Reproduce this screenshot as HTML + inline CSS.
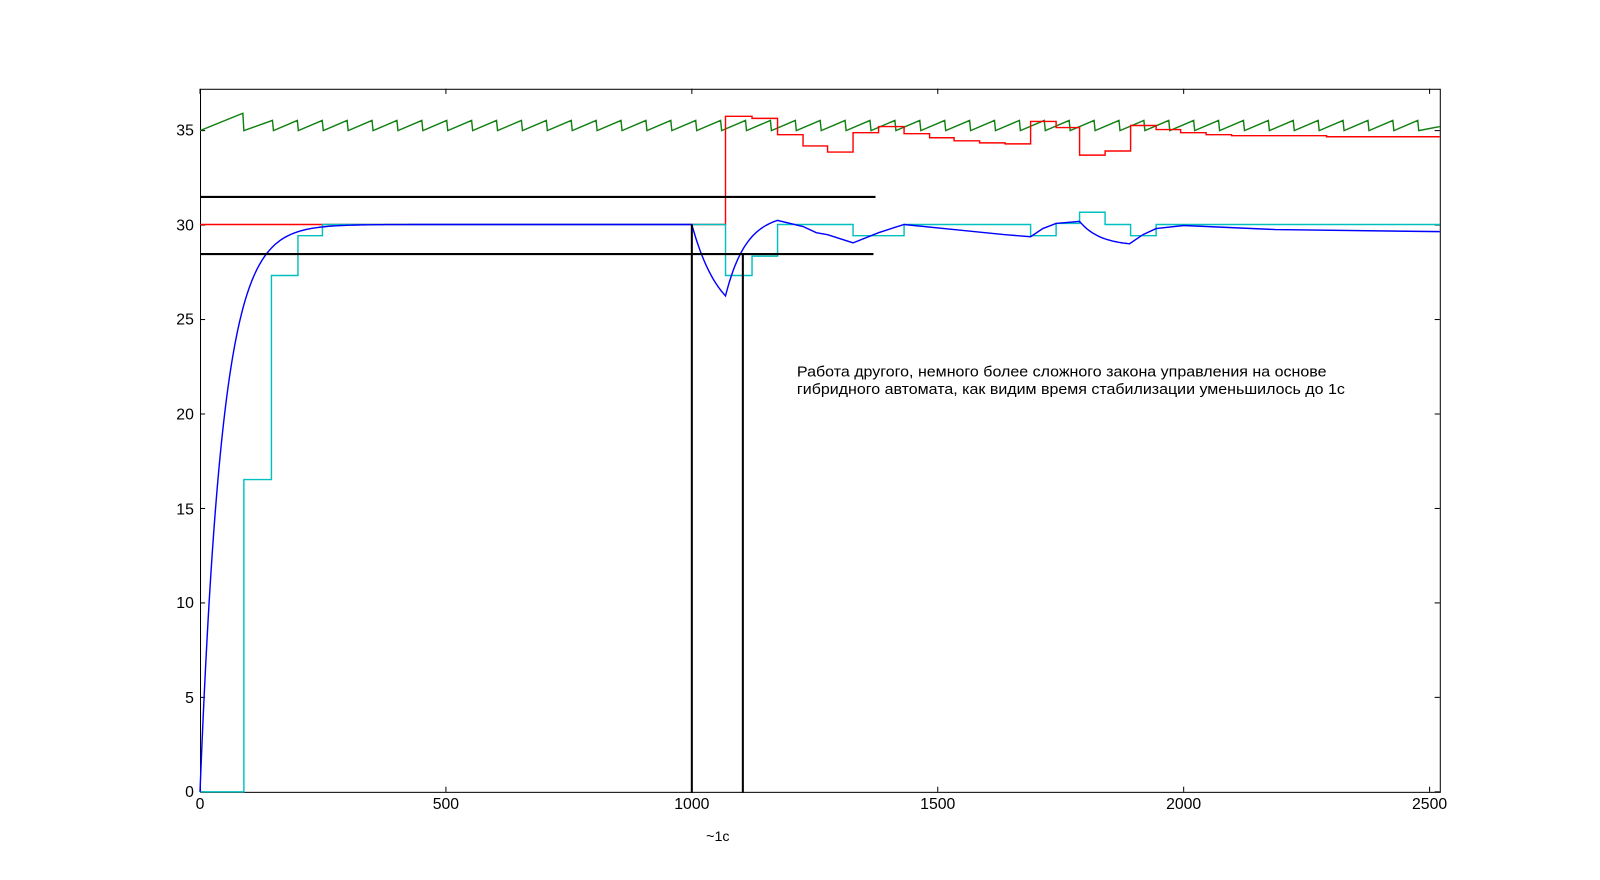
<!DOCTYPE html>
<html><head><meta charset="utf-8"><style>
html,body{margin:0;padding:0;background:#fff;width:1600px;height:880px;overflow:hidden}
svg{display:block}
text{font-family:"Liberation Sans",sans-serif;fill:#000}
</style></head><body>
<svg id="s" width="1600" height="880" xmlns="http://www.w3.org/2000/svg">
<g transform="scale(1.0204)">
<rect x="196.5" y="87.5" width="1215" height="689" fill="#fff" stroke="#000" stroke-width="1"/>
<g id="ticks" stroke="#000" stroke-width="1"></g>
<path id="green" fill="none" stroke="#108010" stroke-width="1.4"/>
<path id="red" fill="none" stroke="#ff0000" stroke-width="1.4"/>
<path id="cyan" fill="none" stroke="#00bfbf" stroke-width="1.4"/>
<path id="blue" fill="none" stroke="#0000ff" stroke-width="1.4"/>
<g stroke="#000" stroke-width="2">
<line x1="196" y1="193" x2="858" y2="193"/>
<line x1="196" y1="249" x2="856" y2="249"/>
<line x1="678" y1="220" x2="678" y2="777"/>
<line x1="728" y1="249" x2="728" y2="777"/>
</g>
<g font-size="15.5" text-anchor="middle">
<text x="196" y="793">0</text><text x="437" y="793">500</text><text x="678" y="793">1000</text>
<text x="919" y="793">1500</text><text x="1160" y="793">2000</text><text x="1401" y="793">2500</text>
</g>
<g font-size="15.5" text-anchor="end">
<text x="190" y="781">0</text><text x="190" y="689">5</text><text x="190" y="596">10</text>
<text x="190" y="504">15</text><text x="190" y="411">20</text><text x="190" y="318">25</text>
<text x="190" y="226">30</text><text x="190" y="133">35</text>
</g>
<text x="781" y="369" font-size="14.5" textLength="519" lengthAdjust="spacingAndGlyphs">Работа другого, немного более сложного закона управления на основе</text>
<text x="781" y="386" font-size="14.5" textLength="537" lengthAdjust="spacingAndGlyphs">гибридного автомата, как видим время стабилизации уменьшилось до 1с</text>
<text x="692" y="824" font-size="14">~1с</text>
</g>
</svg>
<script>
var t=document.getElementById('ticks'),h='';
[196,437,678,919,1160,1401].forEach(function(x){h+='<line x1="'+x+'" y1="776" x2="'+x+'" y2="771"/><line x1="'+x+'" y1="87" x2="'+x+'" y2="92"/>';});
for(var v=0;v<=35;v+=5){var y=776-v*18.514;h+='<line x1="196" y1="'+y+'" x2="201" y2="'+y+'"/><line x1="1411" y1="'+y+'" x2="1406" y2="'+y+'"/>';}
t.innerHTML=h;
var g='M196,128 L238,111 L239,128';
for(var x=267;x<1411;x+=24.4){g+=' L'+x.toFixed(1)+',118 L'+(x+1).toFixed(1)+',128';}
g+=' L1411,124';
document.getElementById('green').setAttribute('d',g);
function steps(pts){var d='M'+pts[0][0]+','+pts[0][1];for(var i=1;i<pts.length;i++){d+=' L'+pts[i][0]+','+pts[i-1][1]+' L'+pts[i][0]+','+pts[i][1];}return d;}
document.getElementById('red').setAttribute('d',steps([[196,220],[711,114],[737,116],[762,132],[787,143],[811,149],[836,130],[861,124],[886,131],[911,135],[935,138],[960,140],[985,141],[1010,119],[1035,125],[1058,152],[1083,148],[1108,123],[1133,127],[1157,130],[1182,132],[1207,133],[1300,134],[1411,134]]));
document.getElementById('cyan').setAttribute('d',steps([[196,776],[239,470],[266,270],[292,231],[316,220],[711,270],[737,251],[762,220],[836,231],[886,220],[1010,231],[1035,219],[1058,208],[1083,220],[1108,231],[1133,220],[1411,220]]));
var b='M196,776';
for(var x=197;x<=678;x++){var y=776-556*(1-Math.exp(-(x-196)/22));b+=' L'+x+','+y.toFixed(1);}
for(var x=679;x<=711;x++){var u=(x-678)/33;b+=' L'+x+','+(220+70*(1-Math.exp(-u*1.2))/(1-Math.exp(-1.2))).toFixed(1);}
for(var x=712;x<=762;x++){var u=(x-711)/51;b+=' L'+x+','+(290-74*(1-Math.exp(-u*2.5))/(1-Math.exp(-2.5))).toFixed(1);}
b+=' L787,222 L800,228 L811,230 L836,238 L861,228 L886,220 L935,225 L985,230 L1010,232 L1022,224 L1035,219 L1058,217';
for(var x=1059;x<=1108;x+=2){var u=(x-1058)/50;b+=' L'+x+','+(217+22*(1-Math.exp(-u*2.5))/(1-Math.exp(-2.5))).toFixed(1);}
b+=' L1120,230 L1133,224 L1160,221 L1250,225 L1411,227';
document.getElementById('blue').setAttribute('d',b);
</script>
</body></html>
